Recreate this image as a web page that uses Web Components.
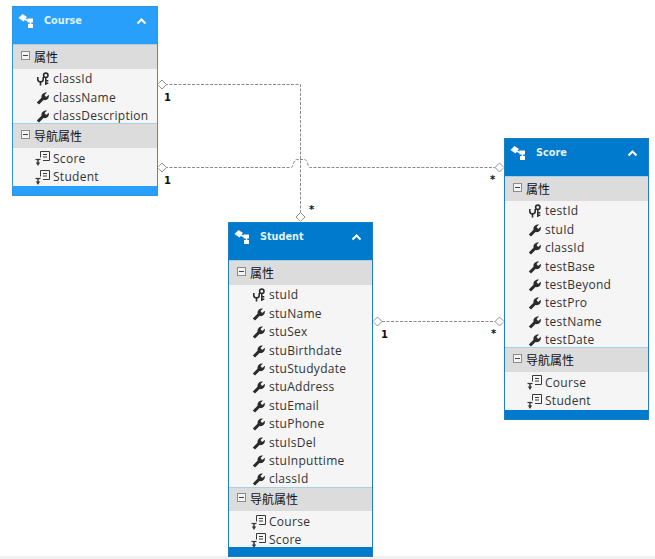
<!DOCTYPE html>
<html><head><meta charset="utf-8">
<style>
html,body{margin:0;padding:0;background:#fff}
body{width:655px;height:559px;overflow:hidden;font-family:"Open Sans","Noto Sans CJK SC",sans-serif}
</style></head><body>
<er-canvas>
<er-links></er-links>
<er-entity name="Course" light style="left:12px;top:6px;width:146px;height:190px">
 <er-section label="属性">
  <er-prop kind="key">classId</er-prop><er-prop>className</er-prop><er-prop>classDescription</er-prop>
 </er-section>
 <er-section label="导航属性">
  <er-prop kind="nav">Score</er-prop><er-prop kind="nav">Student</er-prop>
 </er-section>
</er-entity>
<er-entity name="Student" style="left:228px;top:222px;width:145px;height:335px">
 <er-section label="属性">
  <er-prop kind="key">stuId</er-prop><er-prop>stuName</er-prop><er-prop>stuSex</er-prop><er-prop>stuBirthdate</er-prop><er-prop>stuStudydate</er-prop><er-prop>stuAddress</er-prop><er-prop>stuEmail</er-prop><er-prop>stuPhone</er-prop><er-prop>stuIsDel</er-prop><er-prop>stuInputtime</er-prop><er-prop>classId</er-prop>
 </er-section>
 <er-section label="导航属性">
  <er-prop kind="nav">Course</er-prop><er-prop kind="nav">Score</er-prop>
 </er-section>
</er-entity>
<er-entity name="Score" style="left:504px;top:138px;width:145px;height:282px">
 <er-section label="属性">
  <er-prop kind="key">testId</er-prop><er-prop>stuId</er-prop><er-prop>classId</er-prop><er-prop>testBase</er-prop><er-prop>testBeyond</er-prop><er-prop>testPro</er-prop><er-prop>testName</er-prop><er-prop>testDate</er-prop>
 </er-section>
 <er-section label="导航属性">
  <er-prop kind="nav">Course</er-prop><er-prop kind="nav">Student</er-prop>
 </er-section>
</er-entity>
<er-label style="left:164px;top:92px">1</er-label>
<er-label style="left:164px;top:175px">1</er-label>
<er-label style="left:490px;top:174px">*</er-label>
<er-label style="left:309px;top:204px">*</er-label>
<er-label style="left:381px;top:329px">1</er-label>
<er-label style="left:491px;top:328px">*</er-label>
</er-canvas>
<script>
class ErCanvas extends HTMLElement{constructor(){super();this.attachShadow({mode:'open'}).innerHTML=`<style>:host{display:block;position:relative;width:655px;height:559px;overflow:hidden}
.strip{position:absolute;left:0;right:0;bottom:0;height:3px;background:#f0f0f0}</style><div class="strip"></div><slot></slot>`}}
class ErLinks extends HTMLElement{constructor(){super();this.attachShadow({mode:'open'}).innerHTML=`<style>:host{display:block;position:absolute;inset:0}svg{display:block}</style>
<svg width="655" height="559" fill="none">
<g stroke="#8a8a8a" stroke-width="1" stroke-dasharray="3 1.5">
<path d="M165 84.5H300.5V212"/>
<path d="M165 167.5H291C293.5 167.5 293 159.5 297 159.5H304.500C308 159.500 307.500 167.500 310 167.500H496"/>
<path d="M382 321.500H496"/>
</g>
<g fill="#fff" stroke="#8f8f8f">
<path d="M157.500 84.500l4.500-4.500 4.500 4.500-4.500 4.500z"/>
<path d="M157.500 167.500l4.500-4.500 4.500 4.500-4.500 4.500z"/>
<path d="M495 167.500l4.500-4.500 4.500 4.500-4.500 4.500z"/>
<path d="M296 217l4.500-4.500 4.500 4.500-4.500 4.500z"/>
<path d="M373 321.500l4.500-4.500 4.500 4.500-4.500 4.500z"/>
<path d="M495 321.500l4.500-4.500 4.500 4.500-4.500 4.500z"/>
</g></svg>`}}
class ErEntity extends HTMLElement{constructor(){super();const s=this.attachShadow({mode:'open'});
const light=this.hasAttribute('light');
s.innerHTML=`<style>:host{display:flex;flex-direction:column;position:absolute;box-sizing:border-box;border:1px solid ${light?'#2f95dc':'#1c7fc4'};background:#f5f5f5;box-shadow:0 0 3px #fff3dc}
header{display:flex;align-items:flex-start;gap:8px;height:38px;flex:none;box-sizing:border-box;padding:3px 10px 0 5px;background:${light?'#28a0fb':'#007acc'};color:${light?'#dff1ff':'#e4f2fb'};font:bold 9.7px/22px "DejaVu Sans",sans-serif}
header span{flex:1}
header svg{flex:none;margin-top:3px}
.body{flex:1;display:flex;flex-direction:column;min-height:0}
footer{flex:none;height:9px;margin-top:auto;background:${light?'#28a0fb':'#007acc'}}</style>
<header><svg width="18" height="17" viewBox="0 0 18 17"><g fill="#fff"><path d="M0.500 5L4.500 1 9 4 5.500 8.500z"/><path d="M9.500 5.500h5.500v4h-5.500z"/><path d="M10 11h5v4h-5z"/></g><path d="M6 6l4 1.500M12.500 9v2.500" stroke="#fff" stroke-width="1.500" fill="none"/></svg><span>${this.getAttribute('name')}</span><svg width="11" height="8" viewBox="0 0 11 8" style="margin-top:7px"><path d="M1.500 6.500L5.500 2.500 9.500 6.500" fill="none" stroke="#fff" stroke-width="2"/></svg></header>
<div class="body"><slot></slot></div><footer></footer>`}}
class ErSection extends HTMLElement{constructor(){super();const s=this.attachShadow({mode:'open'});
s.innerHTML=`<style>:host{display:block}
.h{display:flex;align-items:center;gap:4px;height:23.500px;padding-left:8px;background:#dcdcdc;color:#111;font:12px/1 "Noto Sans CJK SC",sans-serif;box-shadow:0 -1px 0 #a9cfe8}
.b{display:block;width:9px;height:9px;margin-top:-3px;flex:none}
.rows{padding:.8px 0 0;display:block}</style>
<div class="h"><svg class="b" viewBox="0 0 9 9"><rect x=".5" y=".5" width="8" height="8" fill="#f4f4f4" stroke="#8c8c8c"/><path d="M2 4.500h5" stroke="#444"/></svg><span>${this.getAttribute('label')}</span></div><div class="rows"><slot></slot></div>`}}
const ICONS={
wrench:`<svg width="14" height="14" viewBox="0 0 14 14"><path d="M0.800 11.500L5.500 6.800C5 3.500 7.500 1 11 1.500L8.500 4 10.200 6 12.800 3.700C13.500 7 11 9.800 7.500 9L3 13.500z" fill="#2b2b2b"/></svg>`,
key:`<svg width="14" height="14" viewBox="0 0 14 14" fill="none" stroke="#2b2b2b"><circle cx="9.800" cy="3.300" r="2.200" stroke-width="1.600"/><path d="M9.800 5.500V13M9.800 8.800h2.500M9.800 11.300h2.500" stroke-width="1.500"/><path d="M1.800 5V7.500C1.800 9 3 9.800 4.500 9.800S7.200 9 7.200 7.500V5M4.500 9.800V13.500" stroke-width="1.600"/></svg>`,
nav:`<svg width="18" height="15" viewBox="0 0 18 15" fill="none" stroke="#3a3a3a"><path d="M6.500 6.500V.5h9v9h-6.500"/><path d="M9 3.500h4M9 6h4"/><path d="M1.500 8.500h5" stroke-width="1.200"/><path d="M4 8.500v3.500" stroke-width="1.500"/><path d="M1.800 11.500h4.400L4 15z" fill="#3a3a3a" stroke="none"/></svg>`};
class ErProp extends HTMLElement{constructor(){super();const k=this.getAttribute('kind');const s=this.attachShadow({mode:'open'});
s.innerHTML=`<style>:host{display:flex;align-items:center;box-sizing:border-box;height:18.400px;padding-top:2px;padding-left:${k=='nav'?21:23}px;color:#333;font:12px/16px "Open Sans","Noto Sans",sans-serif;letter-spacing:.28px;white-space:nowrap}
.i{flex:none;width:${k=='nav'?19:17}px;display:flex}</style><span class="i">${ICONS[k||'wrench']}</span><slot></slot>`}}
class ErLabel extends HTMLElement{constructor(){super();this.attachShadow({mode:'open'}).innerHTML=`<style>:host{position:absolute;color:#111;font:bold 10px/12px "DejaVu Sans",sans-serif}</style><slot></slot>`}}
customElements.define('er-canvas',ErCanvas);customElements.define('er-links',ErLinks);customElements.define('er-section',ErSection);customElements.define('er-prop',ErProp);customElements.define('er-label',ErLabel);customElements.define('er-entity',ErEntity);
</script>
</body></html>
